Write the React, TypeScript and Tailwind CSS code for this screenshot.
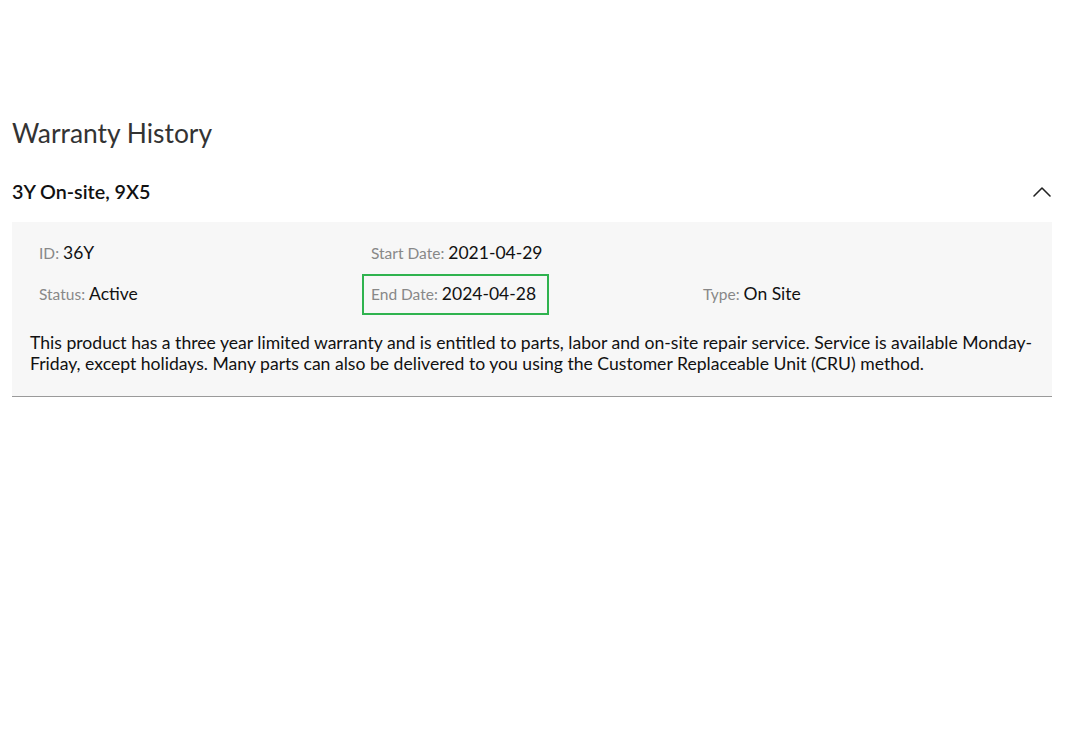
import { ChevronUp } from 'lucide-react';

const FONT = { fontFamily: 'Lato, "Liberation Sans", sans-serif' };

function Field({ label, value, highlight = false }: { label: string; value: string; highlight?: boolean }) {
  return (
    <div className="flex items-center h-[41px]">
      <span
        className={
          highlight
            ? 'inline-flex items-baseline border-2 border-[#2fb34f] ml-[-9px] pl-[7px] pr-[11px] h-[41px] items-center'
            : 'inline-flex items-baseline'
        }
      >
        <span className="text-[15.5px] text-[#888888]">{label}</span>
        <span className="text-[15.5px] text-[#888888]">:</span>
        <span className="text-[17.5px] text-[#111111] ml-[4px]">{value}</span>
      </span>
    </div>
  );
}

export default function App() {
  return (
    <div className="min-h-screen bg-white pt-[113px] px-[12px] w-[1064px]" style={FONT}>
      <h1 className="text-[26.4px] leading-[40px] text-[#333333]">Warranty History</h1>
      <div className="flex items-center justify-between mt-[19px] h-[40px]">
        <h2 className="text-[19.7px] font-semibold text-[#111111]">3Y On-site, 9X5</h2>
        <ChevronUp className="w-[32px] h-[32px] text-[#222222] mr-[-6px]" strokeWidth={1.2} />
      </div>
      <div className="mt-[10px] bg-[#f7f7f7] border-b border-[#9a9a9a] pt-[11px] pb-[22px]">
        <div className="grid grid-cols-[332px_332px_332px] pl-[27px]">
          <Field label="ID" value="36Y" />
          <Field label="Start Date" value="2021-04-29" />
          <div />
          <Field label="Status" value="Active" />
          <Field label="End Date" value="2024-04-28" highlight />
          <Field label="Type" value="On Site" />
        </div>
        <p className="mt-[17px] px-[18px] text-[17.6px] leading-[21px] text-[#111111]">
          This product has a three year limited warranty and is entitled to parts, labor and on-site repair service.
          Service is available Monday-Friday, except holidays. Many parts can also be delivered to you using the
          Customer Replaceable Unit (CRU) method.
        </p>
      </div>
    </div>
  );
}
